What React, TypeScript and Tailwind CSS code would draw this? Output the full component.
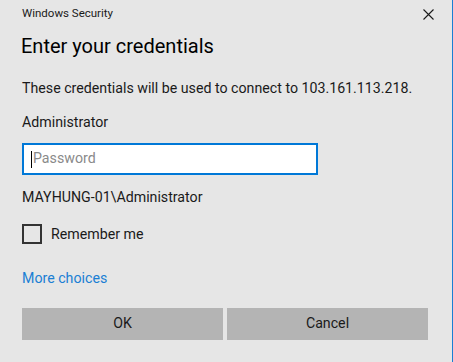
import React from "react";

export default function App() {
  return (
    <div className="w-[453px] h-[362px] bg-[#e6e6e6] border-r border-[#1a7fd4] text-[#1a1a1a] overflow-hidden font-['Roboto',sans-serif]">
      <div className="flex items-center justify-between h-[26px] pl-[22px] pr-[18px] pt-[1px]">
        <span className="text-[11.5px] leading-none text-[#1a1a1a]">Windows Security</span>
        <svg width="11" height="11" viewBox="0 0 11 11" className="mt-[2px]">
          <path d="M0.5 0.5 L10.5 10.5 M10.5 0.5 L0.5 10.5" stroke="#1a1a1a" strokeWidth="1.1" />
        </svg>
      </div>
      <div className="pl-[21px] pt-[6px] text-[20px] leading-[28px] text-black">Enter your credentials</div>
      <div className="pl-[22px] pt-[18px] text-[14.2px] leading-[20px]">
        These credentials will be used to connect to 103.161.113.218.
      </div>
      <div className="pl-[22px] pt-[14px] text-[14.2px] leading-[20px]">Administrator</div>
      <div className="pl-[22px] pt-[11px]">
        <div className="w-[296px] h-[32px] bg-white border-2 border-[#0078d7] flex items-center pl-[7px]">
          <span className="w-px h-[17px] bg-black mr-[1px]" />
          <span className="text-[14.2px] text-[#8a8a8a]">Password</span>
        </div>
      </div>
      <div className="pl-[22px] pt-[12px] text-[14.2px] leading-[20px]">MAYHUNG-01\Administrator</div>
      <div className="pl-[22px] pt-[17px] flex items-center gap-[9px]">
        <div className="w-[20px] h-[20px] border-2 border-[#333333]" />
        <span className="text-[14.2px] leading-[20px]">Remember me</span>
      </div>
      <div className="pl-[22px] pt-[24px] text-[14.2px] leading-[20px] text-[#1a7fd4]">More choices</div>
      <div className="pl-[22px] pt-[20px] flex gap-[4px]">
        <div className="w-[201px] h-[32px] bg-[#b4b4b4] flex items-center justify-center text-[14.2px]">OK</div>
        <div className="w-[201px] h-[32px] bg-[#b4b4b4] flex items-center justify-center text-[14.2px]">Cancel</div>
      </div>
    </div>
  );
}
